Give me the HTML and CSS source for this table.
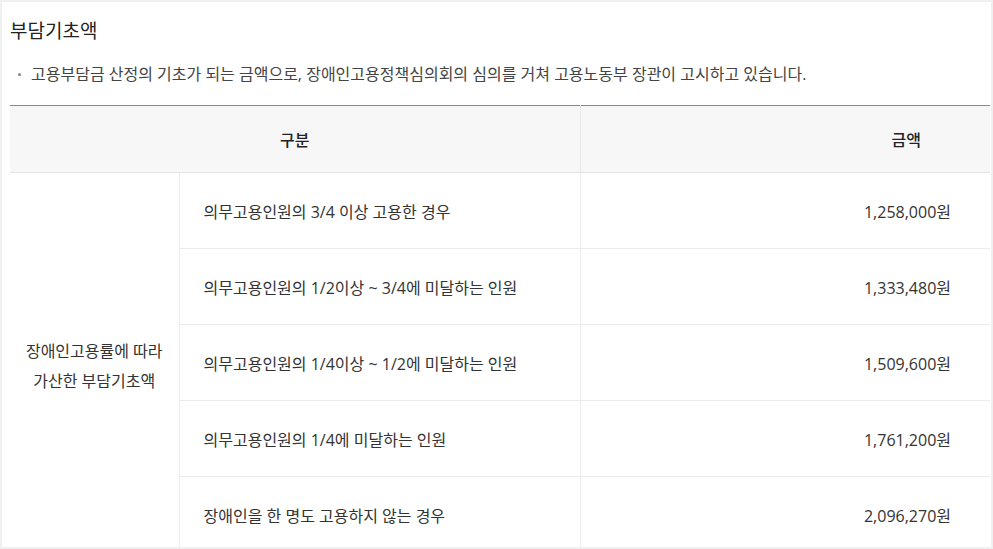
FILE: index.html
```html
<!DOCTYPE html>
<html lang="ko">
<head>
<meta charset="utf-8">
<title>부담기초액</title>
<link rel="stylesheet" href="styles.css">
</head>
<body>
<div class="panel">
  <h2 class="title">부담기초액</h2>
  <ul class="notes">
    <li>고용부담금 산정의 기초가 되는 금액으로, 장애인고용정책심의회의 심의를 거쳐 고용노동부 장관이 고시하고 있습니다.</li>
  </ul>
  <table class="fee-table">
    <colgroup>
      <col class="c1">
      <col class="c2">
      <col class="c3">
    </colgroup>
    <thead>
      <tr>
        <th colspan="2" class="th-center">구분</th>
        <th class="th-amount">금액</th>
      </tr>
    </thead>
    <tbody>
      <tr>
        <td rowspan="5" class="group">장애인고용률에 따라<br>가산한 부담기초액</td>
        <td class="desc">의무고용인원의 3/4 이상 고용한 경우</td>
        <td class="amount">1,258,000원</td>
      </tr>
      <tr>
        <td class="desc">의무고용인원의 1/2이상 ~ 3/4에 미달하는 인원</td>
        <td class="amount">1,333,480원</td>
      </tr>
      <tr>
        <td class="desc">의무고용인원의 1/4이상 ~ 1/2에 미달하는 인원</td>
        <td class="amount">1,509,600원</td>
      </tr>
      <tr>
        <td class="desc">의무고용인원의 1/4에 미달하는 인원</td>
        <td class="amount">1,761,200원</td>
      </tr>
      <tr>
        <td class="desc">장애인을 한 명도 고용하지 않는 경우</td>
        <td class="amount">2,096,270원</td>
      </tr>
    </tbody>
  </table>
</div>
</body>
</html>
```

FILE: styles.css
```css
html, body {
  margin: 0;
  padding: 0;
  height: 100%;
  overflow: hidden;
}
body {
  background: #f0f0f0;
  font-family: "Open Sans", "Noto Sans CJK KR", "Noto Sans", sans-serif;
  color: #333;
  padding: 2px;
  box-sizing: border-box;
}
.panel {
  background: #fff;
  width: 989px;
  height: 545px;
  overflow: hidden;
  padding: 16px 1px 0 8px;
  box-sizing: border-box;
}
.title {
  margin: 0;
  font-size: 19px;
  line-height: 27px;
  font-weight: 400;
  color: #222;
}
.notes {
  list-style: none;
  margin: 19px 0 0 0;
  padding: 0;
}
.notes li {
  position: relative;
  padding-left: 21px;
  font-size: 16px;
  line-height: 20px;
  color: #444;
}
.notes li::before {
  content: "";
  position: absolute;
  left: 8px;
  top: 9px;
  width: 3px;
  height: 3px;
  border-radius: 50%;
  background: #888;
}
.fee-table {
  margin-top: 21px;
  width: 980px;
  border-collapse: collapse;
  table-layout: fixed;
  font-size: 16px;
}
.c1 { width: 169px; }
.c2 { width: 401px; }
.c3 { width: 410px; }
.fee-table thead th {
  background: #f7f7f7;
  height: 66px;
  padding: 0;
  border-top: 1px solid #888;
  border-bottom: 1px solid #e4e4e4;
  font-weight: 500;
  color: #222;
}
.th-center {
  text-align: center;
  border-right: 1px solid #e8e8e8;
}
.th-amount {
  text-align: right;
  padding-right: 69px !important;
}
.fee-table td {
  height: 75px;
  padding: 0;
  border-bottom: 1px solid #ececec;
  vertical-align: middle;
}
.group {
  text-align: center;
  line-height: 30px;
  border-right: 1px solid #ececec;
  padding-top: 6px !important;
}
.desc {
  padding-left: 24px !important;
  border-right: 1px solid #ececec;
}
.amount {
  text-align: right;
  padding-right: 39px !important;
}
```
